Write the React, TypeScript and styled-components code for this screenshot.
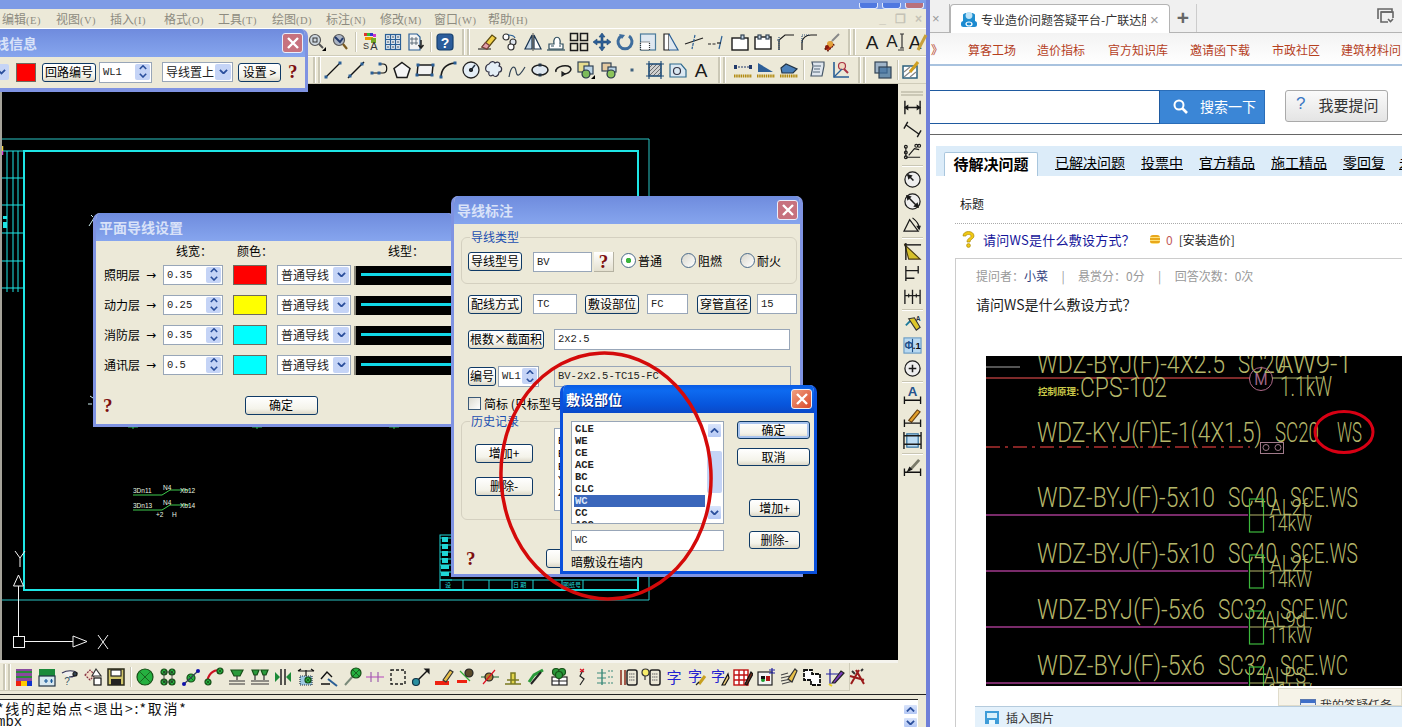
import React from "react";
import styled, { createGlobalStyle, css } from "styled-components";

const CJK = `"Noto Sans CJK SC", "Liberation Sans", sans-serif`;
const MONO = `"Liberation Mono", "Noto Sans CJK SC", monospace`;
const FACE = "#ece9d8";

const Global = createGlobalStyle`
  html, body { margin: 0; padding: 0; background: #fff; overflow: hidden; }
  * { box-sizing: border-box; }
  body { font-family: ${CJK}; font-size: 12px; color: #000; }
`;

/* ---------- page ---------- */
const Desktop = styled.div`
  position: relative;
  display: flex;
  width: 1402px;
  height: 727px;
  overflow: hidden;
`;
const CadWindow = styled.div`
  display: flex;
  flex-direction: column;
  width: 930px;
  height: 727px;
  background: ${FACE};
  border-right: 4px solid #6f7fd8;
`;
const CadTitle = styled.div`
  display: flex;
  justify-content: flex-end;
  align-items: flex-end;
  gap: 4px;
  height: 9px;
  padding-right: 2px;
  background: #7d9be6;
`;
const CadTitleBtn = styled.span<{ $red?: boolean }>`
  width: 19px;
  height: 6px;
  border: 1px solid #dfe8fb;
  border-top: 0;
  border-radius: 0 0 3px 3px;
  background: ${(p) => (p.$red ? "#b9707c" : "#4f78e0")};
`;
const MenuBar = styled.div`
  display: flex;
  align-items: center;
  height: 19px;
  padding-left: 2px;
  color: #8d8b80;
  font-size: 12px;
  white-space: nowrap;
`;
const MenuItem = styled.span`
  width: 54px;
  flex: none;
`;
const MenuLetter = styled.span`
  font-family: "Liberation Serif", serif;
  font-size: 10.5px;
  letter-spacing: 0.5px;
`;
const WinGlyphs = styled.div`
  display: flex;
  gap: 9px;
  margin-left: auto;
  padding-right: 4px;
  color: #c4c2b6;
  font-size: 12px;
  font-family: "Liberation Sans", sans-serif;
  font-weight: 700;
`;

/* ---------- toolbars ---------- */
const ToolRow = styled.div<{ $start: number }>`
  display: flex;
  align-items: center;
  height: 28px;
  padding-left: ${(p) => p.$start}px;
  background: ${FACE};
  border-top: 1px solid #fff;
  border-bottom: 1px solid #cfccb9;
`;
const Tool = styled.span`
  display: flex;
  flex: none;
  align-items: center;
  justify-content: center;
  width: 23px;
  height: 22px;
`;
const ToolGap = styled.span<{ $w: number }>`
  flex: none;
  width: ${(p) => p.$w}px;
  height: 20px;
  position: relative;
  &::after {
    content: "";
    position: absolute;
    left: 50%;
    top: 0;
    bottom: 0;
    width: 1px;
    background: #c9c6b4;
    box-shadow: 1px 0 0 #fff;
  }
`;
const Grip = styled.span<{ $w: number }>`
  flex: none;
  width: ${(p) => p.$w}px;
  height: 26px;
  display: flex;
  justify-content: center;
  gap: 2px;
  &::before,
  &::after {
    content: "";
    width: 2px;
    height: 100%;
    background: #cbc8b6;
    border-right: 1px solid #fff;
  }
`;
const CanvasRow = styled.div`
  display: flex;
  height: 576px;
`;
const Canvas = styled.div`
  width: 898px;
  height: 576px;
  margin-top: 0;
  background: #000;
  border-top: 1px solid #000;
  border-left: 2px solid #a5a39a;
`;
const DrawingSvg = styled.svg`
  display: block;
`;
const SideBar = styled.div`
  display: flex;
  flex-direction: column;
  align-items: center;
  flex: 1;
  padding-top: 7px;
`;
const SideTool = styled(Tool)`
  height: 22.5px;
`;
const SideGap = styled.span`
  flex: none;
  width: 21px;
  height: 1px;
  margin: 1.5px 0 2px;
  background: #c9c6b4;
  box-shadow: 0 1px 0 #fff;
`;
const SideGrip = styled.span`
  width: 22px;
  height: 5px;
  border-top: 2px solid #cbc8b6;
  border-bottom: 2px solid #cbc8b6;
`;
const LowerZone = styled.div`
  height: 35px;
  padding-top: 3px;
  border-bottom: 1px solid #222;
  position: relative;
`;
const WhiteStrip = styled.div`
  position: absolute;
  left: 0;
  top: 0;
  width: 898px;
  height: 3px;
  background: #f5f4ee;
`;
const BottomTools = styled.div`
  display: flex;
  align-items: center;
  width: 850px;
  height: 28px;
  padding-left: 2px;
  border-right: 1px solid #cfccb9;
  border-bottom: 1px solid #cfccb9;
  background: ${FACE};
`;
const CommandGap = styled.div`
  height: 4px;
`;
const Command = styled.div`
  display: flex;
  flex: 1;
  min-height: 0;
  width: 918px;
  border-top: 1px solid #222;
  background: #fff;
  overflow: hidden;
`;
const CommandText = styled.div`
  flex: 1;
  margin-left: -3px;
  padding-top: 1px;
  font-family: ${MONO};
  font-size: 14px;
  line-height: 14px;
  color: #111;
  white-space: pre;
`;
const CommandCjk = styled.div`
  letter-spacing: 1.75px;
  font-family: ${CJK};
`;
const CommandScroll = styled.div`
  display: flex;
  flex-direction: column;
  gap: 2px;
  width: 15px;
  padding-top: 4px;
`;
const ScrollBtn = styled.span<{ $tall?: number }>`
  display: flex;
  align-items: center;
  justify-content: center;
  flex: none;
  width: 100%;
  height: ${(p) => p.$tall ?? 11}px;
  border: 1px solid #fff;
  border-radius: 2px;
  background: linear-gradient(#d9e4fb, #b4c8f5);
`;

/* ---------- xp windows ---------- */
const Win = styled.section<{ $active?: boolean }>`
  position: absolute;
  display: flex;
  flex-direction: column;
  overflow: hidden;
  background: ${FACE};
  border: 3px solid ${(p) => (p.$active ? "#0a50dc" : "#7f93e2")};
  border-top: 0;
  border-radius: 7px 7px 0 0;
`;
const WinTitle = styled.header<{ $active?: boolean; $h?: number }>`
  display: flex;
  flex: none;
  align-items: center;
  justify-content: space-between;
  height: ${(p) => p.$h ?? 28}px;
  margin: 0 -3px;
  padding: 0 5px 0 6px;
  font-size: 14px;
  font-weight: 700;
  white-space: nowrap;
  ${(p) =>
    p.$active
      ? css`
          color: #fff;
          text-shadow: 1px 1px 0 #0a2a8a;
          background: linear-gradient(#0a5be4 0%, #0d6af0 20%, #0755dc 70%, #0a49c8 100%);
        `
      : css`
          color: #d9e2f8;
          background: linear-gradient(#6f8bdd 0%, #7896e4 40%, #86a5ee 100%);
        `}
`;
const CloseBtn = styled.span<{ $active?: boolean }>`
  display: flex;
  align-items: center;
  justify-content: center;
  width: 21px;
  height: 20px;
  border: 1px solid #e9eefb;
  border-radius: 3px;
  background: ${(p) => (p.$active ? "linear-gradient(135deg,#f0a080,#d9482a)" : "#c7727e")};
`;
const FloatBar = styled(Win)`
  left: -42px;
  top: 29px;
  width: 350px;
  height: 63px;
  border-bottom-width: 4px;
`;
const FloatBody = styled.div`
  display: flex;
  align-items: center;
  height: 30px;
`;
const FloatTitleText = styled.span`
  padding-left: 31px;
  font-size: 14px;
`;
const Swatch = styled.span<{ $c: string; $w?: number; $h?: number }>`
  flex: none;
  width: ${(p) => p.$w ?? 34}px;
  height: ${(p) => p.$h ?? 20}px;
  background: ${(p) => p.$c};
  border: 1px solid #6e6c60;
`;
const XpBtn = styled.span<{ $w: number; $h?: number; $default?: boolean }>`
  display: flex;
  flex: none;
  align-items: center;
  justify-content: center;
  width: ${(p) => p.$w}px;
  height: ${(p) => p.$h ?? 19}px;
  padding-bottom: 2px;
  border: 1px solid #0f3a66;
  border-radius: 3px;
  background: linear-gradient(#fff, #f4f3ea 70%, #dcd8c8);
  font-size: 12px;
  white-space: nowrap;
  ${(p) => p.$default && "box-shadow: inset 0 0 0 2px #a9c4ee;"}
`;
const Field = styled.span<{ $w: number; $h?: number; $ro?: boolean }>`
  display: flex;
  flex: none;
  align-items: center;
  width: ${(p) => p.$w}px;
  height: ${(p) => p.$h ?? 20}px;
  padding-left: 3px;
  padding-bottom: 1px;
  background: ${(p) => (p.$ro ? FACE : "#fff")};
  border: 1px solid #98a6b8;
  font-family: ${MONO};
  font-size: 10.5px;
  color: #222;
  white-space: nowrap;
  overflow: hidden;
`;
const SpinBox = styled(Field)`
  justify-content: space-between;
  padding-right: 1px;
`;
const SpinArrows = styled.span`
  display: flex;
  flex-direction: column;
  gap: 0;
  width: 15px;
  height: 16px;
  flex: none;
  background: #c5d4f6;
  border-radius: 2px;
  align-items: center;
  justify-content: space-around;
`;
const SelectBox = styled(Field)`
  justify-content: space-between;
  padding-right: 1px;
  font-family: ${CJK};
  font-size: 12px;
`;
const SelectArrow = styled.span`
  display: flex;
  align-items: center;
  justify-content: center;
  width: 16px;
  height: 16px;
  flex: none;
  background: #c5d4f6;
  border-radius: 2px;
`;
const Hint = styled.span`
  flex: none;
  color: #7d0f0f;
  font-family: "Liberation Serif", serif;
  font-size: 19px;
  font-weight: 700;
  line-height: 18px;
`;

/* floating bar spacers */
const Spacer = styled.span<{ $w: number }>`
  flex: none;
  width: ${(p) => p.$w}px;
`;

/* wire settings */
const WireSettings = styled(Win)`
  left: 93px;
  top: 213px;
  width: 362px;
  height: 214px;
`;
const HeaderRow = styled.div`
  display: flex;
  height: 19px;
  padding-left: 80px;
  align-items: center;
  white-space: nowrap;
`;
const HeaderCell = styled.span<{ $ml?: number }>`
  margin-left: ${(p) => p.$ml ?? 0}px;
`;
const LayerRow = styled.div`
  display: flex;
  align-items: center;
  height: 30px;
  padding-left: 8px;
`;
const LayerName = styled.span`
  width: 36px;
  flex: none;
  margin-right: 6px;
  padding-bottom: 1px;
`;
const LayerArrow = styled.span`
  flex: none;
  width: 17px;
  font-family: "DejaVu Sans", sans-serif;
  font-size: 12px;
`;
const LinePreview = styled.span`
  flex: none;
  width: 110px;
  height: 19px;
  margin-left: 3px;
  padding: 7px 0 0 5px;
  background: #000;
  border-left: 2px solid #8a887c;
  &::after {
    content: "";
    display: block;
    height: 3px;
    background: #11d8e8;
  }
`;
const WireFooter = styled.div`
  display: flex;
  align-items: center;
  height: 19px;
  margin-top: 16px;
  padding-left: 7px;
`;

/* annotation dialog */
const Annot = styled(Win)`
  left: 451px;
  top: 196px;
  width: 352px;
  height: 381px;
  border-bottom-width: 3px;
`;
const Group = styled.div<{ $h: number; $top?: number; $pt: number }>`
  position: relative;
  flex: none;
  display: flex;
  align-items: flex-start;
  width: 336px;
  height: ${(p) => p.$h}px;
  margin: ${(p) => p.$top ?? 0}px 0 0 7px;
  padding: ${(p) => p.$pt}px 0 0 6px;
  border: 1px solid #d4d0c0;
  border-radius: 6px;
`;
const Legend = styled.span`
  position: absolute;
  left: 8px;
  top: -9px;
  padding: 0 1px;
  background: ${FACE};
  color: #1c4fb0;
  font-size: 12px;
  line-height: 16px;
`;
const AnnotRow = styled.div<{ $top: number; $h?: number }>`
  display: flex;
  align-items: center;
  flex: none;
  height: ${(p) => p.$h ?? 20}px;
  margin-top: ${(p) => p.$top}px;
  padding-left: 14px;
  white-space: nowrap;
`;
const HelpBtn = styled.span`
  display: flex;
  align-items: center;
  justify-content: center;
  flex: none;
  width: 20px;
  height: 20px;
  background: linear-gradient(#fff, #e4e0cf);
  border-right: 1px solid #b5b2a2;
  border-bottom: 1px solid #b5b2a2;
`;
const Radio = styled.span<{ $w: number; $on?: boolean }>`
  display: flex;
  align-items: center;
  gap: 2px;
  flex: none;
  width: ${(p) => p.$w}px;
  &::before {
    content: "";
    width: 13px;
    height: 13px;
    border-radius: 50%;
    border: 1px solid #4a6a8a;
    background: ${(p) =>
      p.$on ? "radial-gradient(circle,#3cb43c 0 2.5px,#fff 3px)" : "linear-gradient(135deg,#d8d6cb,#fff)"};
  }
`;
const CheckBoxMark = styled.span`
  flex: none;
  width: 13px;
  height: 13px;
  margin-right: 3px;
  border: 1px solid #3c5a78;
  background: linear-gradient(135deg, #dcdad0, #fff);
`;
const ActionColumn = styled.div`
  display: flex;
  flex-direction: column;
  flex: none;
  gap: 14px;
  margin: 16px 0 0 7px;
`;
const HistoryList = styled.div`
  display: flex;
  flex-direction: column;
  flex: none;
  width: 230px;
  height: 83px;
  margin-left: 21px;
  padding: 6px 0 0 3px;
  background: #fff;
  border: 1px solid #98a6b8;
  font-family: ${MONO};
  font-size: 10.5px;
  line-height: 13px;
  white-space: nowrap;
`;
const AnnotFooter = styled.div`
  display: flex;
  align-items: center;
  height: 19px;
  margin-top: 29px;
  padding-left: 12px;
`;

/* laying place */
const Place = styled(Win)`
  left: 560px;
  top: 385px;
  width: 257px;
  height: 189px;
  border-bottom-width: 3px;
`;
const PlaceBody = styled.div`
  display: flex;
  padding: 8px 0 0 8px;
`;
const PlaceLeft = styled.div`
  display: flex;
  flex-direction: column;
  flex: none;
  width: 153px;
`;
const PlaceList = styled.div`
  display: flex;
  height: 103px;
  padding: 1px;
  overflow: hidden;
  background: #fff;
  border: 1px solid #98a6b8;
`;
const PlaceItems = styled.div`
  flex: none;
  width: 132px;
  font-family: ${MONO};
  font-size: 10.5px;
  font-weight: 700;
  line-height: 12px;
  color: #222;
  padding-left: 1px;
`;
const PlaceItem = styled.div<{ $sel?: boolean }>`
  height: 12px;
  padding-left: 1px;
  ${(p) => p.$sel && "background:#3a66bb;color:#dce6fa;"}
`;
const PlaceScroll = styled.div`
  display: flex;
  flex-direction: column;
  flex: none;
  width: 15px;
  margin-left: 2px;
  height: 99px;
  padding: 0;
`;
const PlaceThumb = styled.span`
  flex: none;
  height: 42px;
  margin: 13px 0 12px;
  background: #c5d4f6;
  border-radius: 2px;
`;
const PlaceDesc = styled.div`
  margin-top: 2px;
  line-height: 18px;
`;
const PlaceInput = styled(Field)`
  margin-top: 6px;
`;
const PlaceRight = styled.div`
  display: flex;
  flex-direction: column;
  flex: none;
  margin-left: 13px;
`;
const PlaceBtnOffset = styled.div<{ $top: number; $left?: number }>`
  margin: ${(p) => p.$top}px 0 0 ${(p) => p.$left ?? 0}px;
`;
const Overlay = styled.svg`
  position: absolute;
  left: 0;
  top: 0;
  pointer-events: none;
`;

/* ---------- browser ---------- */
const Browser = styled.div`
  position: relative;
  display: flex;
  flex-direction: column;
  flex: 1;
  min-width: 0;
  overflow: hidden;
  background: #fff;
`;
const TabBar = styled.div`
  display: flex;
  align-items: flex-end;
  height: 33px;
  background: #f0f0f0;
  border-bottom: 1px solid #b4b4b4;
  flex: none;
`;
const GhostTabEnd = styled.span`
  display: flex;
  align-items: center;
  width: 20px;
  height: 28px;
  color: #999;
  font-size: 13px;
  padding-left: 2px;
  font-family: "Liberation Sans", sans-serif;
  border-right: 1px solid #b4b4b4;
`;
const ActiveTab = styled.div`
  display: flex;
  align-items: center;
  gap: 4px;
  width: 220px;
  height: 29px;
  margin-bottom: -1px;
  padding: 0 4px 0 10px;
  background: #fff;
  border: 1px solid #b4b4b4;
  border-bottom: 0;
  border-radius: 4px 4px 0 0;
  font-size: 12px;
  color: #333;
  white-space: nowrap;
`;
const TabText = styled.span`
  width: 165px;
  flex: none;
  overflow: hidden;
`;
const TabClose = styled.span`
  color: #999;
  font-family: "Liberation Sans", sans-serif;
  font-size: 15px;
`;
const PlusCell = styled.span`
  display: flex;
  align-items: center;
  justify-content: center;
  width: 27px;
  height: 28px;
  color: #666;
  font-family: "Liberation Sans", sans-serif;
  font-size: 21px;
  font-weight: 700;
  border-right: 1px solid #ccc;
`;
const TabRight = styled.span`
  margin: 0 8px 6px auto;
`;
const LinkBar = styled.nav`
  display: flex;
  align-items: center;
  flex: none;
  height: 33px;
  padding: 2px 0 0 1px;
  background: linear-gradient(#f3f3f3, #fff);
  border-bottom: 2px solid #a9c3df;
  color: #b5401e;
  font-size: 12px;
  white-space: nowrap;
`;
const NavLink = styled.span<{ $ml: number }>`
  margin-left: ${(p) => p.$ml}px;
  flex: none;
`;
const SearchRow = styled.div`
  display: flex;
  flex: none;
  align-items: flex-start;
  height: 69px;
  padding-top: 24px;
  border-bottom: 1px solid #666;
`;
const SearchInput = styled.div`
  width: 230px;
  height: 34px;
  border: 1px solid #1f5aa0;
  border-left: 0;
`;
const SearchBtn = styled.div`
  display: flex;
  align-items: center;
  gap: 12px;
  width: 105px;
  height: 34px;
  padding: 0 0 2px 13px;
  background: #3b86d6;
  border: 1px solid #2a6db8;
  border-left: 0;
  color: #fff;
  font-size: 14px;
`;
const AskBtn = styled.div`
  display: flex;
  align-items: center;
  gap: 13px;
  width: 103px;
  height: 32px;
  margin-left: 20px;
  padding: 0 0 4px 10px;
  background: linear-gradient(#fafafa, #e4e4e4);
  border: 1px solid #aaa;
  border-radius: 3px;
  color: #333;
  font-size: 15px;
  white-space: nowrap;
`;
const AskMark = styled.span`
  color: #3b78c4;
  font-family: "Liberation Sans", sans-serif;
  font-size: 17px;
`;
const QTabs = styled.div`
  display: flex;
  flex: none;
  align-items: flex-end;
  height: 30px;
  margin: 11px 0 0 6px;
  padding-left: 8px;
  background: #dcecf9;
  white-space: nowrap;
  font-size: 14px;
`;
const QActive = styled.span`
  display: flex;
  align-items: center;
  justify-content: center;
  flex: none;
  width: 94px;
  height: 24px;
  padding-bottom: 3px;
  background: #fff;
  border: 1px solid #a9c6dd;
  border-bottom: 0;
  border-radius: 2px 2px 0 0;
  font-size: 15px;
  font-weight: 700;
`;
const QLink = styled.span<{ $ml: number }>`
  flex: none;
  margin: 0 0 4px ${(p) => p.$ml}px;
  text-decoration: underline;
`;
const ColTitle = styled.div`
  flex: none;
  height: 48px;
  margin-left: 25px;
  padding: 19px 0 0 5px;
  border-bottom: 1px dotted #aaa;
  line-height: 18px;
  font-size: 12px;
  color: #222;
`;
const QuestionRow = styled.div`
  display: flex;
  flex: none;
  align-items: center;
  height: 34px;
  padding: 0 0 3px 32px;
  white-space: nowrap;
`;
const QuestionLink = styled.span`
  margin-left: 8px;
  color: #14149a;
  font-size: 13px;
  letter-spacing: 0.25px;
`;
const Coin = styled.span`
  width: 10px;
  height: 9px;
  margin-left: 15px;
  border-radius: 3px;
  background: repeating-linear-gradient(#e8a71c 0 2px, #ffe27a 2px 3px);
`;
const Score = styled.span`
  margin: 0 6px 0 6px;
  color: #c25a5a;
`;
const CategoryTag = styled.span`
  color: #222;
  font-size: 12px;
`;
const QuestionBox = styled.div`
  position: relative;
  flex: 1;
  min-height: 0;
  margin-left: 25px;
  border-top: 1px solid #ccc;
  border-left: 1px solid #ccc;
  display: flex;
  flex-direction: column;
`;
const Meta = styled.div`
  flex: none;
  display: flex;
  height: 34px;
  align-items: center;
  padding: 0 0 2px 20px;
  color: #999;
  font-size: 12px;
  white-space: nowrap;
`;
const Asker = styled.b`
  font-weight: 400;
  color: #33407c;
`;
const MetaBar = styled.span`
  width: 30px;
  text-align: center;
`;
const QuestionText = styled.div`
  flex: none;
  height: 63px;
  padding: 1px 0 0 20px;
  font-size: 14px;
  color: #222;
`;
const PictureSvg = styled.svg`
  display: block;
  flex: none;
  margin-left: 30px;
`;
const TaskPopup = styled.div`
  position: absolute;
  right: 0;
  bottom: 21px;
  display: flex;
  align-items: flex-start;
  gap: 4px;
  width: 124px;
  height: 18px;
  padding: 10px 0 0 21px;
  background: #f6f3e8;
  border: 1px solid #e0dccb;
  overflow: hidden;
  color: #333;
  font-size: 12px;
  white-space: nowrap;
  line-height: 12px;
`;
const TaskIcon = styled.span`
  flex: none;
  width: 16px;
  height: 10px;
  background: linear-gradient(#3f6fc8 0 3px, #e8eef8 3px);
  border: 1px solid #5a78b0;
`;
const InsertRow = styled.div`
  position: absolute;
  left: 975px;
  right: 0;
  bottom: 0;
  display: flex;
  align-items: center;
  gap: 7px;
  height: 21px;
  padding-left: 10px;
  background: #e4f1fb;
  border-top: 1px solid #b5cbdd;
  font-size: 12px;
  color: #333;
`;

/* ---------- icon helpers ---------- */
const Ico = ({ children, s = 20 }: { children: React.ReactNode; s?: number }) => (
  <svg width={s} height={s} viewBox="0 0 20 20" fill="none" stroke="#1b1b1b" strokeWidth="1.2">
    {children}
  </svg>
);
const BL = "#2a5f96";
const TL = "#1c7a9c";
const Node = ({ x, y, c = BL }: { x: number; y: number; c?: string }) => <rect x={x - 1.5} y={y - 1.5} width="3" height="3" fill={c} stroke="none" />;
const GreenBall = ({ x, y, r = 3 }: { x: number; y: number; r?: number }) => (
  <g>
    <circle cx={x} cy={y} r={r} fill="#25b040" stroke="#174f17" />
    <path d={`M${x - r * 0.6} ${y - r * 0.6}L${x + r * 0.6} ${y + r * 0.6}M${x + r * 0.6} ${y - r * 0.6}L${x - r * 0.6} ${y + r * 0.6}`} stroke="#174f17" strokeWidth="0.8" />
  </g>
);
const Glyph = ({ t, x = 10, y = 16, size = 17, fill = "#1b1b1b", w = 400 }: { t: string; x?: number; y?: number; size?: number; fill?: string; w?: number }) => (
  <text x={x} y={y} textAnchor="middle" fontFamily={`"Liberation Sans", "Noto Sans CJK SC", sans-serif`} fontSize={size} fontWeight={w} fill={fill} stroke="none">
    {t}
  </text>
);

const rowOneA = [
  <><circle cx="8" cy="8" r="5.5" fill="#cdd7df" stroke="#555" /><rect x="6" y="6" width="4" height="4" stroke="#333" strokeWidth="1" /><path d="M12 12l4 4" stroke="#555" strokeWidth="2" /><path d="M19 19h-4l4-4z" fill="#000" stroke="none" /></>,
  <><circle cx="9" cy="8" r="5.5" fill="#aab4c4" stroke="#555" /><path d="M5 5l5 5 3-4" stroke="#233a6a" strokeWidth="2" /><path d="M13 12l4 5" stroke="#7a5a20" strokeWidth="2.2" /></>,
];
const rowOneB = [
  <><rect x="4" y="1" width="3" height="3" fill="#d33" stroke="none" /><rect x="7" y="1" width="3" height="3" fill="#3b3" stroke="none" /><rect x="10" y="1" width="3" height="3" fill="#33c" stroke="none" /><rect x="13" y="2" width="3" height="3" fill="#c3c" stroke="none" /><rect x="5" y="5" width="8" height="3" fill="#e90" stroke="none" /><rect x="11" y="6" width="5" height="5" fill="#7a2" stroke="none" /><Glyph t="S" x="6" y="17" size="9" fill="#333" /><Glyph t="A" x="14" y="18" size="11" fill="#333" /></>,
  <><rect x="2.5" y="2.5" width="15" height="15" fill="#dfe7ee" stroke={BL} /><path d="M7.5 3v14M12.5 3v14M3 7.5h14M3 12.5h14" stroke={BL} /><path d="M5 5h0M10 5h0M15 5h0M5 10h0M10 10h0M15 10h0M5 15h0M10 15h0M15 15h0" stroke="#234" strokeLinecap="round" strokeWidth="1.5" /></>,
  <><path d="M3 2h8l3 3v13H3z" fill="#f4f4f4" stroke={BL} /><path d="M5 6h2v2H5zM9 6h2v2H9zM5 10h2v2H5zM9 10h2v2H9z" stroke="#456" strokeWidth="0.8" /><path d="M15 8v7m-2.5-2l2.5 3 2.5-3" stroke="#222" strokeWidth="1.5" /></>,
];
const helpIcon = (
  <><rect x="2" y="2" width="16" height="16" rx="3" fill="#2c5d9b" stroke="#16406f" /><Glyph t="?" y="15.5" size="14" fill="#fff" w={700} /></>
);
const rowOneC = [
  <><path d="M1 17h13" stroke="#333" /><path d="M5 15L15 3l4 3-9 11z" fill="#f1cf46" stroke="#5a4a10" /><path d="M5 15l3.5-4.5 4 3L10 17z" fill="#e3a0a8" stroke="#7a4040" /></>,
  <><circle cx="6" cy="5" r="3" stroke="#333" fill="#fff" /><circle cx="13" cy="10" r="3" stroke="#333" fill="#dfe6ee" /><circle cx="11" cy="15" r="3" stroke="#333" fill="#fff" /><path d="M8 3c3 0 6 0 7 3" stroke={BL} /></>,
  <><path d="M9 3L2 17h7z" fill="#c7d9e8" stroke="#1a3450" /><path d="M11 3l7 14h-7z" fill="#fff" stroke="#1a3450" /><path d="M10 1v18" stroke="#333" strokeWidth="0.8" /></>,
  <><path d="M3 12h5c-2-9 8-9 6 0h3v5H3z" fill="#fff" stroke="#2a4a5a" /><path d="M5 14h3M13 14h2" stroke="#2a4a5a" /><path d="M1 18h18" stroke="#2a4a5a" /></>,
  <><rect x="1.5" y="1.5" width="7" height="7" strokeWidth="1.5" /><rect x="11.5" y="1.5" width="7" height="7" strokeWidth="1.5" /><rect x="1.5" y="11.5" width="7" height="7" strokeWidth="1.5" /><rect x="11.5" y="11.5" width="7" height="7" strokeWidth="1.5" /></>,
  <><path d="M10 1l3 4h-2v4h4V7l4 3-4 3v-2h-4v4h2l-3 4-3-4h2v-4H5v2l-4-3 4-3v2h4V5H7z" fill="#2d5f98" stroke="#1d4674" strokeWidth="0.6" /></>,
  <><path d="M6 4a7 7 0 1 0 8 0" stroke="#3e6d9d" strokeWidth="3" /><path d="M4 2l6 1-3 4z" fill="#3e6d9d" stroke="none" /></>,
  <><rect x="2.5" y="2" width="15" height="16" fill="#dfe8f0" stroke="#4a7a9a" /><rect x="2.5" y="10" width="9" height="8" fill="#fff" stroke="#333" strokeDasharray="1 1" /></>,
  <><path d="M3 2h5v16H3z" fill="#fff" stroke="#222" /><path d="M8 2l9 16H8" fill="#dfe8f0" stroke={BL} /></>,
  <><path d="M1 12L19 6" stroke="#222" /><path d="M11 3L8 17" stroke={BL} strokeDasharray="3 1" /></>,
  <><path d="M1 12h9M12 11h0" stroke="#222" strokeDasharray="3 1.5" /><path d="M15 4l-3 13" stroke={BL} /><path d="M10 11h4" stroke="#222" /></>,
  <><rect x="2" y="6" width="16" height="12" fill="#fff" strokeWidth="1.4" /><rect x="11" y="3" width="3" height="4" fill="#c7d6e6" stroke="#345" /></>,
  <><rect x="2" y="5" width="16" height="12" fill="#fff" strokeWidth="1.4" /><rect x="5" y="3" width="3" height="4" fill="#c7d6e6" stroke="#345" /><rect x="13" y="3" width="3" height="4" fill="#c7d6e6" stroke="#345" /></>,
  <><path d="M3 18V8L9 3h9" strokeWidth="1.2" /><path d="M1 8h4" strokeDasharray="1 1" stroke="#357" /><path d="M3 18V5" strokeDasharray="1 1" stroke="#357" /></>,
  <><path d="M3 18V11C3 6 7 3 12 3h6" strokeWidth="1.2" /><path d="M3 11V3h8" stroke="#357" strokeDasharray="1 1" /></>,
  <><path d="M3 17l6-7 3 3-6 6z" fill="#c43418" stroke="#5a1a0a" strokeDasharray="2 1" /><path d="M10 9l7-7" stroke="#888" strokeWidth="2" /><circle cx="8" cy="12" r="3" fill="#e2a23a" stroke="none" /><circle cx="5" cy="15" r="2" fill="#8a1a0a" stroke="none" /></>,
];
const rowOneD = [
  <Glyph t="A" size={19} x={10} y={17} />,
  <><Glyph t="A" x={7} y={15} size={17} /><path d="M15 2h4M17 2v14M15 16h4M13 18h6" stroke="#333" /></>,
  <><Glyph t="A" x={7} y={17} size={19} /><path d="M10 18l8-15" stroke="#c7a13a" strokeWidth="3" /></>,
];
const rowTwoA = [
  <><path d="M3 17L17 3" stroke="#111" /><Node x={3} y={17} /><Node x={17} y={3} /></>,
  <><path d="M2 18L18 2" stroke="#111" strokeWidth="1.5" /><Node x={4} y={16} /><Node x={16} y={4} /></>,
  <><path d="M3 13h7M12 4h2c5 0 5 9 0 9h-4" stroke="#111" /><Node x={3} y={13} /><Node x={11} y={4} /><Node x={10} y={13} /></>,
  <path d="M10 2.5l8 6-3 9H5l-3-9z" fill="#f5f5f5" strokeWidth="1.5" />,
  <><path d="M3 5h15l-1 10H2z" fill="#f2f2f2" strokeWidth="1.5" /><Node x={3} y={5} /><Node x={18} y={5} /><Node x={2} y={15} /><Node x={17} y={15} /></>,
  <><path d="M3 18C3 9 8 4 17 3" strokeWidth="1.6" /><Node x={3} y={17} /><Node x={17} y={3} /></>,
  <><circle cx="10" cy="10" r="8" fill="#e4eef6" stroke="#222" strokeWidth="1.3" /><path d="M10 10l4-5" stroke="#234" strokeWidth="1.5" /><circle cx="10" cy="10" r="1.5" fill="#234" /></>,
  <path d="M5 4c2-3 5-3 6-1 3-2 6 0 4 3 4 1 3 6 0 6 0 4-4 6-6 3-3 2-5 0-4-3C0 12 1 5 5 4z" fill="#e4eef6" stroke="#334" />,
  <path d="M2 17C4 5 8 5 9 11s3 6 9-4" stroke="#345" />,
  <><ellipse cx="10" cy="10" rx="8" ry="5" fill="#dfe8f0" strokeWidth="1.5" /><Node x={10} y={5} c="#234" /><Node x={10} y={15} c="#234" /></>,
  <><path d="M3 12C1 6 17 3 18 9c0 3-4 5-7 5" strokeWidth="1.5" /><path d="M9 12l3 2-3 2z" fill="#234" /></>,
  <><rect x="2" y="2" width="11" height="10" fill="#e6dc8e" stroke="#345" /><rect x="8" y="6" width="9" height="8" fill="#bcd5e6" stroke="#345" /><circle cx="10" cy="14" r="4" fill="#7cba5a" stroke="#234" /><path d="M19 19h-4l4-4z" fill="#000" stroke="none" /></>,
  <><rect x="3" y="3" width="9" height="8" fill="#e4c9a0" stroke="#345" /><rect x="9" y="7" width="8" height="5" fill="#bcd5e6" stroke="#345" /><circle cx="12" cy="14" r="4" fill="#8cc45a" stroke="#234" /></>,
  <rect x="8.5" y="8.5" width="3" height="3" fill="#40627e" stroke="none" />,
  <><rect x="4" y="4" width="12" height="12" fill="#cfcfcf" stroke="#24507a" /><path d="M4 8l4-4M4 12l8-8M4 16L16 4M8 16l8-8M12 16l4-4" stroke="#444" strokeWidth="0.7" /><path d="M1 4h18M1 16h18M4 1v18M16 1v18" stroke="#24507a" /></>,
  <><path d="M2 4h11l5 6v7H2z" fill="#dbe8f2" stroke="#2f6a8e" /><circle cx="9" cy="11" r="3.5" stroke="#334" /></>,
  <Glyph t="A" size={19} y={17} />,
];
const Ruler = ({ y = 17 }: { y?: number }) => <path d={`M1 ${y}h18`} stroke="#b28a10" strokeWidth="3" strokeDasharray="1.5 .7" />;
const rowTwoB = [
  <><path d="M2 7h16" stroke="#223a6a" strokeDasharray="2 1" /><rect x="1" y="5" width="3" height="4" fill="#223a6a" stroke="none" /><rect x="16" y="5" width="3" height="4" fill="#223a6a" stroke="none" /><Ruler y={16} /></>,
  <><path d="M2 3l15 9H2z" fill="#2d5f98" stroke="none" /><Ruler y={16} /></>,
  <><path d="M2 8l5-4 11 5-4 4H3z" fill="#4a80ba" stroke="#234" /><Ruler y={16} /></>,
];
const rowTwoC = [
  <><path d="M4 2h12v4l-2 10H3l2-10z" fill="#dfe6ee" stroke="#456" /><path d="M6 6h7M6 9h6M5 12h7" stroke="#567" /></>,
  <><path d="M3 2v15h15" stroke={BL} strokeWidth="1.6" /><circle cx="11" cy="6" r="3.5" fill="#f0d8c0" stroke="#a34" /><path d="M13 9l4 4" stroke="#a34" strokeWidth="2" /><path d="M3 17l8-8" stroke={BL} /></>,
];
const rowTwoD = [
  <><rect x="2" y="2" width="12" height="11" fill="#9fb4c8" stroke="#345" /><rect x="6" y="7" width="12" height="11" fill="#3e6f9d" fillOpacity="0.75" stroke="#345" /></>,
  <><rect x="2" y="6" width="14" height="12" fill="#fff" stroke="#2a5f7c" strokeWidth="1.5" /><path d="M3 17l12-10M3 12l6-5M9 17l6-5" stroke="#888" /><path d="M9 12l8-10" stroke="#d0a020" strokeWidth="3" /></>,
];
const DimBar = ({ y = 17 }: { y?: number }) => (
  <path d={`M1 ${y}h18M1.5 ${y - 4}v8M18.5 ${y - 4}v8`} stroke="#111" strokeWidth="1.4" />
);
const sideIcons: (React.ReactNode | "sep")[] = [
  <><path d="M2 10h16M2 3v14M18 3v14" strokeWidth="1.5" /><path d="M2 10l3-2v4zM18 10l-3-2v4z" fill="#111" /></>,
  <><path d="M3 5l14 10M1 9l4-7M15 18l4-7" strokeWidth="1.5" /></>,
  <><path d="M3 15V4M3 15h15M6 13l6-7 5 1" strokeWidth="1.2" /><circle cx="3" cy="4" r="1.5" /><circle cx="3" cy="10" r="1.5" /><circle cx="3" cy="15" r="1.5" /><circle cx="14" cy="3" r="1.5" /><circle cx="17" cy="3" r="1.5" /></>,
  "sep",
  <><circle cx="10" cy="10" r="8" fill="#eee" strokeWidth="1.3" /><path d="M5 5l6 6" strokeWidth="1.6" /><path d="M5 5l4 1-3 3z" fill="#111" /></>,
  <><circle cx="10" cy="10" r="8" fill="#eee" strokeWidth="1.3" /><path d="M4.5 4.5l11 11" strokeWidth="1.6" /><path d="M4 4l4 1-3 3zM16 16l-4-1 3-3z" fill="#111" /></>,
  <><path d="M1 17h15L7 5z" strokeWidth="1.3" /><path d="M10 3c4 3 7 7 7 11" stroke="#111" /><path d="M17 15l-2-3h3z" fill="#111" /></>,
  "sep",
  <><path d="M1 3h18" strokeWidth="1.5" /><path d="M2 3l16 15h-12z" fill="#d5c02a" stroke="#4a3a10" /><path d="M3 1v18" strokeWidth="1.5" /></>,
  <><path d="M3 2v16M16 2v8M3 7h13M3 15h9" strokeWidth="1.4" /></>,
  <><path d="M2 3v15M10 3v15M18 3v15M2 9h16" strokeWidth="1.4" /><path d="M6 7v4M14 7v4" /></>,
  "sep",
  <><path d="M9 6L3 12" stroke={TL} strokeWidth="2" /><path d="M6 5l6-1 6 10-4 3z" fill="#dec72a" stroke="#333" /><Glyph t="A" x={16} y={7} size={7} fill="#234" w={700} /></>,
  <><rect x="1" y="2" width="18" height="16" fill="#b8d9f1" stroke="#6a9cc4" /><Glyph t="Φ" x={6} y={14} size={11} fill="#1d4f88" w={700} /><path d="M10 3v14" stroke="#1d4f88" /><Glyph t=".1" x={14.5} y={14} size={10} fill="#111" w={700} /></>,
  <><circle cx="10" cy="10" r="8" fill="#eee" strokeWidth="1.3" /><path d="M6 10h8M10 6v8" strokeWidth="1.6" /></>,
  "sep",
  <><Glyph t="A" x={10} y={11} size={14} fill="#24528e" w={700} /><DimBar y={15} /></>,
  <><path d="M6 13L15 2l3 2-9 11z" fill="#e2a02a" stroke="#6a4010" /><DimBar y={16} /></>,
  <><rect x="4" y="3" width="12" height="14" fill="#bcdcf4" stroke="#2a6a9a" /><path d="M1 1v18M19 1v18M1 5h18M1 14h18" strokeWidth="1.5" /></>,
  "sep",
  <><path d="M8 12L17 2" stroke="#7a7a6a" strokeWidth="3" /><path d="M5 14l4-2-2-2z" fill="#111" /><DimBar y={15} /></>,
];
const bottomA = [
  <><rect x="2" y="2" width="16" height="12" fill="#8a4aa0" stroke="none" /><path d="M2 5h16M2 10h16" stroke="#2a8a3a" strokeWidth="2" /><rect x="2" y="14" width="5" height="5" fill="#e21" stroke="none" /><rect x="7" y="14" width="6" height="5" fill="#fc0" stroke="none" /><rect x="13" y="14" width="5" height="5" fill="#13c" stroke="none" /></>,
  <><rect x="2" y="2" width="16" height="7" fill="#1a8a3a" stroke="none" /><rect x="2" y="9" width="16" height="10" fill="#d8e8f0" stroke="#234" /><path d="M7 14h4M9 12v4M13 14h3M14.5 12v4" stroke="#1a5a9a" /></>,
  <><path d="M2 6c5-3 12-3 15 0-1 3-4 4-8 4" stroke="#335" fill="#f0f0f0" /><circle cx="15" cy="7" r="2" fill="#345" /><Glyph t="?" x={7} y={18} size={10} fill="#356" /></>,
  <><path d="M2 8l5-5 5 5-5 5z" fill="#f2dcc8" stroke="#834" strokeDasharray="2 1" /><path d="M13 2l5 7h-9z" fill="#fff" stroke="#333" /><rect x="11" y="11" width="7" height="7" fill="#fff" stroke="#111" /></>,
  <><rect x="2" y="2" width="16" height="16" fill="#cfc46a" stroke="#2a2a1a" strokeWidth="1.5" /><rect x="5" y="3" width="10" height="6" fill="#fff" stroke="#222" /><rect x="5" y="12" width="10" height="6" fill="#222" stroke="none" /></>,
];
const bottomB = [
  <GreenBall x={10} y={10} r={8} />,
  <><GreenBall x={6} y={5} /><GreenBall x={14} y={5} /><GreenBall x={6} y={15} /><GreenBall x={14} y={15} /><path d="M6 5h8v10H6z" stroke="#333" strokeWidth="0.8" /></>,
  <><GreenBall x={10} y={11} r={4} /><path d="M3 17L17 4" stroke="#345" /><circle cx="3" cy="17" r="2" fill="#11a" stroke="none" /><circle cx="17" cy="4" r="2" fill="#11a" stroke="none" /></>,
  <><path d="M3 16C4 7 9 3 16 3" stroke="#c12" strokeWidth="2.2" /><GreenBall x={4} y={15} r={3} /><GreenBall x={16} y={4} r={3} /></>,
  <><path d="M4 3h12l-3 6H7z" fill="#2a9a3a" stroke="#174f17" /><path d="M10 9v4M2 14h16M2 17h16" stroke="#333" /></>,
  <><path d="M2 3h7l-2 5H4zM11 3h7l-2 5h-3z" fill="#2a9a3a" stroke="#174f17" /><path d="M5 8v5M14 8v5M1 14h18M1 17h18" stroke="#333" /></>,
  <><path d="M8 2v16M12 2v16" stroke="#222" strokeWidth="1.5" /><path d="M2 5l5 5-5 5zM18 5l-5 5 5 5z" fill="#1c8a38" stroke="none" /></>,
  <><rect x="4" y="9" width="12" height="9" fill="#9cc8e2" stroke="#234" strokeDasharray="1 1" /><GreenBall x={12} y={13} r={3} /><path d="M2 4h16M2 4l3-2M18 4l-3-2M10 3v6" stroke="#111" /></>,
  <><path d="M2 12l6-7 5 5M2 17h9" stroke="#111" strokeWidth="1.4" /><path d="M9 12l9 7" stroke={BL} strokeWidth="2" /></>,
  <><path d="M3 18L12 8" stroke="#7a8a7a" strokeWidth="2" /><GreenBall x={14} y={6} r={5} /></>,
  <><path d="M1 10h18" stroke="#c060c0" /><path d="M6 5v10M13 5v10" stroke="#a060b0" /></>,
  <rect x="3" y="3" width="14" height="14" strokeDasharray="3 2" strokeWidth="1.4" />,
  <><path d="M5 15L17 3" stroke="#111" strokeWidth="1.5" /><path d="M14 2l4 0 0 4z" fill="#111" /><circle cx="5" cy="15" r="3.5" fill="#2a8fa0" stroke="#134" /></>,
  <><rect x="1" y="14" width="14" height="4" fill="#e21" stroke="none" /><path d="M9 13L16 3l3 2-7 10z" fill="#e8c04a" stroke="#333" /></>,
  <><rect x="0" y="13" width="10" height="3" fill="#e21" stroke="none" /><path d="M3 4l10 10" stroke="#3a3" /><circle cx="12" cy="6" r="4" fill="#5a4a2a" stroke="#222" /></>,
  <><path d="M1 10h18" stroke="#3a7a4a" /><circle cx="9" cy="10" r="4" fill="#ad8030" stroke="#222" /><path d="M3 17L15 3" stroke="#d12" /></>,
  <><path d="M2 17h16M8 17V6h4v11M4 13h12" stroke="#7a7a20" strokeWidth="1.5" fill="#e2d44a" /></>,
  <><path d="M3 15L8 8l9-5" stroke="#2a9a3a" strokeWidth="3" /><path d="M5 17L15 5" stroke="#222" strokeWidth="2" /></>,
  <><rect x="3" y="10" width="15" height="8" fill="#fff" stroke="#222" /><path d="M10 10v8M3 14h15" stroke="#222" /><circle cx="7" cy="5" r="3.5" fill="#2a9a3a" stroke="#174f17" /><circle cx="13" cy="5" r="3.5" fill="#2a9a3a" stroke="#174f17" /><circle cx="10" cy="8" r="3.5" fill="#2a9a3a" stroke="#174f17" /></>,
  <><path d="M11 3l-3 6 4 3-4 6" stroke="#222" /><path d="M8 2l4 3M12 2L8 5" stroke="#d12" /></>,
  <><path d="M7 2v16" stroke="#3a8a7a" strokeWidth="1.4" /><path d="M2 6h9M2 11h9M2 16h9" stroke="#3a8a7a" /><path d="M13 4h5M13 10h5M13 16h5" stroke="#3a8a7a" strokeDasharray="2 1" /></>,
  <><path d="M3 3v15M7 3v15" stroke="#8a2a1a" strokeWidth="1.5" /><rect x="9" y="3" width="10" height="15" rx="2" stroke="#222" strokeWidth="1.5" /><path d="M11 7h6M11 10h6M11 13h6" stroke="#666" strokeDasharray="1.5 .5" /></>,
  <><circle cx="4.5" cy="5.5" r="3.5" fill="#f8ee6a" stroke="#333" /><path d="M4 9v4" stroke="#333" /><rect x="9" y="3" width="10" height="15" rx="2" stroke="#222" strokeWidth="1.5" /><path d="M11 7h6M11 10h6M11 13h6" stroke="#666" strokeDasharray="1.5 .5" /></>,
  <Glyph t="字" size={15} y={16} fill="#2222d0" />,
  <><Glyph t="字" size={14} x={8} y={14} fill="#2222d0" /><path d="M12 17l6-8" stroke="#c8a020" strokeWidth="3" /><path d="M9 18l3-3" stroke="#222" /></>,
  <><Glyph t="字" size={14} x={8} y={14} fill="#2222d0" /><path d="M12 18L18 7l1 4-4 7z" fill="#e8c87a" stroke="#111" /></>,
  <><rect x="1" y="3" width="14" height="15" fill="#fff" stroke="#c01010" strokeWidth="1.4" /><path d="M1 8h14M1 13h14M6 3v15M11 3v15" stroke="#c01010" strokeWidth="1.4" /><path d="M12 17l6-12 2 2-6 11z" fill="#6a2a1a" stroke="#111" /></>,
  <><rect x="2" y="5" width="14" height="13" fill="#f4f4f4" stroke="#222" /><circle cx="7" cy="13" r="2" fill="#1a9a2a" stroke="none" /><rect x="10" y="9" width="4" height="5" fill="#b01818" stroke="none" /><rect x="5" y="9" width="4" height="3" fill="#111" stroke="none" /><path d="M13 3h6M13 6h6M16 1v5" stroke="#2222a0" /></>,
  <><path d="M2 8l7-2M2 11l9-2M2 14l10-2M3 17l11-3" stroke="#444" /><path d="M9 12l7-10 2 2-5 11z" fill="#e8c04a" stroke="#333" /></>,
  <path d="M2 3h8v4h8v11H9v-5H2z" fill="#fff" stroke="#111" strokeWidth="1.8" strokeDasharray="4 1" />,
  <><path d="M1 7h13M5 2v15" stroke="#2222a0" /><path d="M7 16L16 4l3 2-9 10z" fill="#7a3ac0" stroke="#222" /><path d="M4 17l3 2" stroke="#e8d020" strokeWidth="2" /></>,
  <><path d="M8 3l8 14M11 3l-8 14M2 9l14 4" stroke="#9a1a1a" strokeWidth="2" /><path d="M4 4l3 3M13 4l2-2" stroke="#333" strokeWidth="2" /></>,
];
const TB = ({ items }: { items: React.ReactNode[] }) => (
  <>
    {items.map((n, i) => (
      <Tool key={i}>
        <Ico>{n}</Ico>
      </Tool>
    ))}
  </>
);

/* chevrons */
const Chev = ({ dir = "down", w = 9, c = "#2b4f9c" }: { dir?: "up" | "down"; w?: number; c?: string }) => (
  <svg width={w} height={w * 0.6} viewBox="0 0 10 6" fill="none" stroke={c} strokeWidth="2">
    <path d={dir === "down" ? "M1 1l4 4 4-4" : "M1 5l4-4 4 4"} />
  </svg>
);
const XMark = () => (
  <svg width="12" height="12" viewBox="0 0 12 12" stroke="#fff" strokeWidth="2.4">
    <path d="M1 1l10 10M11 1L1 11" />
  </svg>
);
const Spin = ({ w, h = 20, v }: { w: number; h?: number; v: string }) => (
  <SpinBox $w={w} $h={h}>
    {v}
    <SpinArrows>
      <Chev dir="up" w={8} />
      <Chev w={8} />
    </SpinArrows>
  </SpinBox>
);
const Select = ({ w, h = 20, v }: { w: number; h?: number; v: string }) => (
  <SelectBox $w={w} $h={h}>
    {v}
    <SelectArrow>
      <Chev />
    </SelectArrow>
  </SelectBox>
);

/* ---------- cad model drawing ---------- */
const CY = "#1fd6d6";
const CadDrawing = () => {
  const left = [178, 205, 233, 261, 288];
  const stamp = [538, 545, 552, 559, 565, 572, 580];
  const cols = [463, 489, 512, 533, 562, 583];
  return (
    <DrawingSvg width="896" height="575" viewBox="2 85 896 575" fill="none">
      <path d="M2 139h647v461H2" stroke="#2bc4c4" strokeWidth="1" />
      <rect x="24" y="151" width="614" height="439" stroke="#1ee6e6" strokeWidth="2" />
      <path d="M7 151v141M13 151v141M18 151v141M2 151h22" stroke="#1ee6e6" />
      {left.map((y) => (
        <path key={y} d={`M2 ${y}h22`} stroke="#1ee6e6" />
      ))}
      <path d="M3 216h4v3H3zM3 222h4v6H3z" fill="#1ee6e6" />
      <path d="M2.5 146v5" stroke="#f0d040" strokeWidth="1.5" />
      <path d="M2.5 151v4" stroke="#e040e0" strokeWidth="1.5" />
      <path d="M89 226l5-8M91 215l2 2" stroke="#cfeff0" />
      <path d="M90 396l3 2M88 404l4 0" stroke="#cfeff0" />
      {[133, 257, 394].map((x) => (
        <g key={x} stroke="#2db85a">
          <path d={`M${x - 5} 427h10M${x} 425v4`} />
        </g>
      ))}
      {/* small circuit */}
      <g stroke="#3ecb4e" strokeWidth="1">
        <path d="M133 495h29l8-5h19" />
        <path d="M133 510h29l8-5h19" />
      </g>
      <g fontFamily='"Liberation Sans", sans-serif' fontSize="6.5" fill="#e8f8e0">
        <text x="133" y="493">3Dn11</text>
        <text x="163" y="490">N4</text>
        <text x="180" y="493">Xb12</text>
        <text x="133" y="508">3Dn13</text>
        <text x="163" y="505">N4</text>
        <text x="180" y="508">Xb14</text>
        <text x="156" y="517">+2</text>
        <text x="172" y="517">H</text>
      </g>
      {/* title block */}
      <rect x="440" y="535" width="198" height="55" stroke={CY} />
      {stamp.map((y) => (
        <path key={y} d={`M440 ${y}h12`} stroke={CY} />
      ))}
      {cols.map((x) => (
        <path key={x} d={`M${x} 580v10`} stroke={CY} />
      ))}
      <path d="M440 580h198" stroke={CY} />
      <g fill={CY} fontFamily='"Noto Sans CJK SC", sans-serif' fontSize="6">
        <path d="M442 537h6v5h-6zM442 544h6v5h-6zM442 551h6v5h-6zM442 558h6v5h-6zM441 565h8v4h-8zM441 572h8v4h-8z" />
        <text x="445" y="587">设</text>
        <text x="513" y="587">日 期</text>
        <text x="563" y="587">图纸号</text>
      </g>
      {/* ucs */}
      <g stroke="#f4f4f4" strokeWidth="1">
        <rect x="13.5" y="636.5" width="11" height="11" />
        <path d="M18.5 636v-50M25 641.5h48" />
        <path d="M18.5 575l-5 11h10z" />
        <path d="M73 636l14 5.5-14 5.5z" />
        <path d="M15 551l5 7 5-7M20 558v9" />
        <path d="M98 635l10 14M108 635l-10 14" />
      </g>
    </DrawingSvg>
  );
};

/* ---------- forum picture ---------- */
const OLIVE = "#b4b66a";
const Cad = ({ x, y, w, t, s = 27 }: { x: number; y: number; w: number; t: string; s?: number }) => (
  <text x={x} y={y} textLength={w} lengthAdjust="spacingAndGlyphs" fontFamily="Roboto, sans-serif" fontWeight="300" fontSize={s} fill={OLIVE}>
    {t}
  </text>
);
const ForumCircuit = ({ y, a, b, long, c }: { y: number; a: string; b: string; long: string; c: string }) => (
  <g>
    <Cad x={1037} y={y} w={long === "5x10" ? 178 : 168} t={`WDZ-BYJ(F)-${long}`} />
    <Cad x={long === "5x10" ? 1228 : 1218} y={y} w={49} t={a} />
    <Cad x={long === "5x10" ? 1290 : 1280} y={y} w={68} t={c} />
    <path d={`M986 ${y + 8}h262`} stroke="#a23a8e" strokeWidth="1.3" />
    <rect x="1249.5" y={y - 8} width="14" height="33" stroke="#3cb83c" strokeWidth="1.2" fill="none" />
    <path d={`M1250 ${y + 8}h60`} stroke={OLIVE} />
    <Cad x={long === "5x10" ? 1270 : 1264} y={y + 8} w={long === "5x10" ? 38 : 42} t={b} s={22} />
    <Cad x={1268} y={y + 24} w={44} t={long === "5x10" ? "14kW" : "11kW"} s={22} />
  </g>
);
const ForumPicture = () => (
  <PictureSvg width="416" height="330" viewBox="986 356 416 330">
    <rect x="986" y="356" width="416" height="330" fill="#000" />
    <path d="M986 367h4M990 367h30" stroke="#aaa" />
    <path d="M986 378h264" stroke="#a83838" strokeWidth="1.3" />
    <Cad x={1037} y={373} w={188} t="WDZ-BYJ(F)-4X2.5" />
    <Cad x={1238} y={373} w={48} t="SC20" />
    <Cad x={1277} y={373} w={75} t="AW9-1" />
    <circle cx="1261" cy="379" r="11.5" fill="none" stroke="#b06a8a" />
    <text x="1261" y="385" textAnchor="middle" fontFamily="Liberation Sans, sans-serif" fontSize="16" fill="#a66a8a">M</text>
    <path d="M1272 378h50" stroke={OLIVE} />
    <text x="1038" y="395" fontFamily='"Noto Sans CJK SC", sans-serif' fontWeight="700" fontSize="9.5" fill="#c9c848">控制原理:</text>
    <Cad x={1080} y={397} w={87} t="CPS-102" />
    <Cad x={1280} y={396} w={52} t="1.1kW" />
    <Cad x={1037} y={442} w={225} t="WDZ-KYJ(F)E-1(4X1.5)" />
    <Cad x={1275} y={442} w={44} t="SC20" />
    <Cad x={1337} y={442} w={25} t="WS" />
    <path d="M986 447h264" stroke="#b03030" strokeWidth="1.3" strokeDasharray="14 5 3 5" />
    <rect x="1260.5" y="442.5" width="23" height="11" fill="none" stroke="#a07a8a" />
    <circle cx="1266" cy="447.5" r="3" fill="none" stroke="#a07a8a" />
    <circle cx="1278" cy="447.5" r="3" fill="none" stroke="#a07a8a" />
    <ellipse cx="1344" cy="432" rx="29" ry="20.5" fill="none" stroke="#d80014" strokeWidth="3" />
    <ForumCircuit y={507} a="SC40" b="AL2f" long="5x10" c="SCE.WS" />
    <ForumCircuit y={563} a="SC40" b="AL2f" long="5x10" c="SCE.WS" />
    <ForumCircuit y={619} a="SC32" b="AL9d" long="5x6" c="SCE.WC" />
    <ForumCircuit y={675} a="SC32" b="ALPS" long="5x6" c="SCE.WC" />
  </PictureSvg>
);

const Favicon = () => (
  <svg width="16" height="17" viewBox="0 0 16 17">
    <path d="M2 4C2 1 14 1 14 4v6c0 3-12 3-12 0z" fill="#1f8fd0" />
    <circle cx="8" cy="4.5" r="3.4" fill="#bfe4f8" />
    <rect x="0" y="10" width="16" height="6" rx="2.5" fill="#1c8ad0" />
    <ellipse cx="8" cy="13" rx="3" ry="2" fill="none" stroke="#fff" strokeWidth="1.2" />
  </svg>
);
const Lens = () => (
  <svg width="15" height="15" viewBox="0 0 15 15" fill="none" stroke="#fff" strokeWidth="2">
    <circle cx="6" cy="6" r="4.5" />
    <path d="M9.5 9.5L14 14" strokeWidth="2.6" />
  </svg>
);
const QuestionMark = () => (
  <svg width="13" height="17" viewBox="0 0 13 17" fill="#f0c814" stroke="#a98a10" strokeWidth="0.7">
    <path d="M1 5c0-6 11-6 11 0 0 3-4 3-4 6H5c0-4 4-4 4-6 0-2-5-2-5 0z" />
    <circle cx="6.5" cy="14.5" r="1.9" />
  </svg>
);
const RestoreIcon = () => (
  <svg width="17" height="15" viewBox="0 0 17 15" fill="none" stroke="#666" strokeWidth="1.6">
    <path d="M1 11V1h14v3H4v10h7" />
    <path d="M4 4h12v6" />
    <path d="M11 11l2.5 2.5L16 11" />
  </svg>
);
const PictureIcon = () => (
  <svg width="14" height="13" viewBox="0 0 14 13">
    <rect width="14" height="13" fill="#3e9cd8" />
    <rect x="2" y="2" width="10" height="5" fill="#d8f0fb" />
    <rect x="4" y="9" width="6" height="4" fill="#e8f8ff" />
  </svg>
);

const MENU = [
  ["编辑", "E"],
  ["视图", "V"],
  ["插入", "I"],
  ["格式", "O"],
  ["工具", "T"],
  ["绘图", "D"],
  ["标注", "N"],
  ["修改", "M"],
  ["窗口", "W"],
  ["帮助", "H"],
];
const LAYERS = [
  ["照明层", "0.35", "#ff0000"],
  ["动力层", "0.25", "#ffff00"],
  ["消防层", "0.35", "#00ffff"],
  ["通讯层", "0.5", "#00ffff"],
];
const PLACES = ["CLE", "WE", "CE", "ACE", "BC", "CLC", "WC", "CC", "ACC"];

export default function App() {
  return (
    <Desktop>
      <Global />
      <CadWindow>
        <CadTitle>
          <CadTitleBtn />
          <CadTitleBtn />
          <CadTitleBtn $red />
        </CadTitle>
        <MenuBar>
          {MENU.map(([a, b]) => (
            <MenuItem key={a}>
              {a}
              <MenuLetter>({b})</MenuLetter>
            </MenuItem>
          ))}
          <WinGlyphs>
            <span>_</span>
            <span>❐</span>
            <span>×</span>
          </WinGlyphs>
        </MenuBar>
        <ToolRow $start={305}>
          <TB items={rowOneA} />
          <ToolGap $w={7} />
          <TB items={rowOneB} />
          <ToolGap $w={6} />
          <Tool>
            <Ico>{helpIcon}</Ico>
          </Tool>
          <Grip $w={19} />
          <TB items={rowOneC} />
          <Grip $w={17} />
          <TB items={rowOneD} />
        </ToolRow>
        <ToolRow $start={312}>
          <Grip $w={9} />
          <TB items={rowTwoA} />
          <Grip $w={19} />
          <TB items={rowTwoB} />
          <ToolGap $w={6} />
          <TB items={rowTwoC} />
          <Grip $w={19} />
          <Tool>
            <Ico>{rowTwoD[0]}</Ico>
          </Tool>
          <ToolGap $w={5} />
          <Tool>
            <Ico>{rowTwoD[1]}</Ico>
          </Tool>
        </ToolRow>
        <CanvasRow>
          <Canvas>
            <CadDrawing />
          </Canvas>
          <SideBar>
            <SideGrip />
            {sideIcons.map((n, i) =>
              n === "sep" ? (
                <SideGap key={i} />
              ) : (
                <SideTool key={i}>
                  <Ico s={19}>{n}</Ico>
                </SideTool>
              ),
            )}
          </SideBar>
        </CanvasRow>
        <LowerZone>
          <WhiteStrip />
          <BottomTools>
            <Grip $w={10} />
            <TB items={bottomA} />
            <ToolGap $w={6} />
            <TB items={bottomB} />
          </BottomTools>
        </LowerZone>
        <CommandGap />
        <Command>
          <CommandText>
            <CommandCjk>*线的起始点&lt;退出&gt;:*取消*</CommandCjk>
            mbx
          </CommandText>
          <CommandScroll>
            <ScrollBtn>
              <Chev dir="up" />
            </ScrollBtn>
            <ScrollBtn>
              <Chev />
            </ScrollBtn>
          </CommandScroll>
        </Command>
      </CadWindow>

      <Browser>
        <TabBar>
          <GhostTabEnd>×</GhostTabEnd>
          <ActiveTab>
            <Favicon />
            <TabText>专业造价问题答疑平台-广联达服</TabText>
            <TabClose>×</TabClose>
          </ActiveTab>
          <PlusCell>+</PlusCell>
          <TabRight>
            <RestoreIcon />
          </TabRight>
        </TabBar>
        <LinkBar>
          <span>》</span>
          <NavLink $ml={25}>算客工场</NavLink>
          <NavLink $ml={21}>造价指标</NavLink>
          <NavLink $ml={23}>官方知识库</NavLink>
          <NavLink $ml={22}>邀请函下载</NavLink>
          <NavLink $ml={22}>市政社区</NavLink>
          <NavLink $ml={21}>建筑材料问</NavLink>
        </LinkBar>
        <SearchRow>
          <SearchInput />
          <SearchBtn>
            <Lens />
            搜索一下
          </SearchBtn>
          <AskBtn>
            <AskMark>?</AskMark>
            我要提问
          </AskBtn>
        </SearchRow>
        <QTabs>
          <QActive>待解决问题</QActive>
          <QLink $ml={17}>已解决问题</QLink>
          <QLink $ml={16}>投票中</QLink>
          <QLink $ml={16}>官方精品</QLink>
          <QLink $ml={16}>施工精品</QLink>
          <QLink $ml={16}>零回复</QLink>
          <QLink $ml={14}>未</QLink>
        </QTabs>
        <ColTitle>标题</ColTitle>
        <QuestionRow>
          <QuestionMark />
          <QuestionLink>请问WS是什么敷设方式？</QuestionLink>
          <Coin />
          <Score>0</Score>
          <CategoryTag>[安装造价]</CategoryTag>
        </QuestionRow>
        <QuestionBox>
          <Meta>
            提问者：<Asker>小菜</Asker>
            <MetaBar>|</MetaBar>悬赏分：0分<MetaBar>|</MetaBar>回答次数：0次
          </Meta>
          <QuestionText>请问WS是什么敷设方式？</QuestionText>
          <ForumPicture />
          <TaskPopup>
            <TaskIcon />
            我的答疑任务
          </TaskPopup>
        </QuestionBox>
      </Browser>

      <FloatBar>
        <WinTitle>
          <FloatTitleText>线信息</FloatTitleText>
          <CloseBtn>
            <XMark />
          </CloseBtn>
        </WinTitle>
        <FloatBody>
          <Spacer $w={32} />
          <SelectArrow>
            <Chev />
          </SelectArrow>
          <Spacer $w={7} />
          <Swatch $c="#ff0000" $w={20} $h={19} />
          <Spacer $w={6} />
          <XpBtn $w={54}>回路编号</XpBtn>
          <Spacer $w={3} />
          <Spin w={53} h={21} v="WL1" />
          <Spacer $w={10} />
          <Select w={71} v="导线置上" />
          <Spacer $w={5} />
          <XpBtn $w={43}>设置 &gt;</XpBtn>
          <Spacer $w={7} />
          <Hint>?</Hint>
        </FloatBody>
      </FloatBar>

      <WireSettings>
        <WinTitle>平面导线设置</WinTitle>
        <HeaderRow>
          <HeaderCell>线宽：</HeaderCell>
          <HeaderCell $ml={25}>颜色：</HeaderCell>
          <HeaderCell $ml={115}>线型：</HeaderCell>
        </HeaderRow>
        {LAYERS.map(([name, w, c]) => (
          <LayerRow key={name}>
            <LayerName>{name}</LayerName>
            <LayerArrow>→</LayerArrow>
            <Spin w={60} v={w} />
            <Spacer $w={10} />
            <Swatch $c={c} />
            <Spacer $w={10} />
            <Select w={74} v="普通导线" />
            <LinePreview />
          </LayerRow>
        ))}
        <WireFooter>
          <Hint>?</Hint>
          <Spacer $w={132} />
          <XpBtn $w={73}>确定</XpBtn>
        </WireFooter>
      </WireSettings>

      <Annot>
        <WinTitle>
          导线标注
          <CloseBtn>
            <XMark />
          </CloseBtn>
        </WinTitle>
        <Group $h={47} $top={13} $pt={14}>
          <Legend>导线类型</Legend>
          <XpBtn $w={54}>导线型号</XpBtn>
          <Spacer $w={11} />
          <Field $w={59}>BV</Field>
          <Spacer $w={2} />
          <HelpBtn>
            <Hint>?</Hint>
          </HelpBtn>
          <Spacer $w={7} />
          <Radio $w={60} $on>
            普通
          </Radio>
          <Radio $w={59}>阻燃</Radio>
          <Radio $w={50}>耐火</Radio>
        </Group>
        <AnnotRow $top={10}>
          <XpBtn $w={54}>配线方式</XpBtn>
          <Spacer $w={11} />
          <Field $w={44}>TC</Field>
          <Spacer $w={8} />
          <XpBtn $w={54}>敷设部位</XpBtn>
          <Spacer $w={8} />
          <Field $w={41}>FC</Field>
          <Spacer $w={9} />
          <XpBtn $w={54}>穿管直径</XpBtn>
          <Spacer $w={6} />
          <Field $w={40}>15</Field>
        </AnnotRow>
        <AnnotRow $top={15} $h={21}>
          <XpBtn $w={76}>根数×截面积</XpBtn>
          <Spacer $w={10} />
          <Field $w={236} $h={21}>
            2x2.5
          </Field>
        </AnnotRow>
        <AnnotRow $top={16} $h={21}>
          <XpBtn $w={28}>编号</XpBtn>
          <Spacer $w={2} />
          <Spin w={41} h={21} v="WL1" />
          <Spacer $w={15} />
          <Field $w={237} $h={21} $ro>
            BV-2x2.5-TC15-FC
          </Field>
        </AnnotRow>
        <AnnotRow $top={10} $h={13}>
          <CheckBoxMark />
          简标 (只标型号)
        </AnnotRow>
        <Group $h={99} $top={11} $pt={6}>
          <Legend>历史记录</Legend>
          <ActionColumn>
            <XpBtn $w={58}>增加+</XpBtn>
            <XpBtn $w={58}>删除-</XpBtn>
          </ActionColumn>
          <HistoryList>
            <span>BV-2x2.5</span>
            <span>BV-2x4</span>
            <span>BV-3x2.5</span>
            <span>YJV-3x4</span>
            <span>ZR-BV</span>
          </HistoryList>
        </Group>
        <AnnotFooter>
          <Hint>?</Hint>
          <Spacer $w={70} />
          <XpBtn $w={74}>确定</XpBtn>
        </AnnotFooter>
      </Annot>

      <Place $active>
        <WinTitle $active>
          敷设部位
          <CloseBtn $active>
            <XMark />
          </CloseBtn>
        </WinTitle>
        <PlaceBody>
          <PlaceLeft>
            <PlaceList>
              <PlaceItems>
                {PLACES.map((p) => (
                  <PlaceItem key={p} $sel={p === "WC"}>
                    {p}
                  </PlaceItem>
                ))}
              </PlaceItems>
              <PlaceScroll>
                <ScrollBtn $tall={15}>
                  <Chev dir="up" />
                </ScrollBtn>
                <PlaceThumb />
                <ScrollBtn $tall={15}>
                  <Chev />
                </ScrollBtn>
              </PlaceScroll>
            </PlaceList>
            <PlaceInput $w={153} $h={21}>
              WC
            </PlaceInput>
            <PlaceDesc>暗敷设在墙内</PlaceDesc>
          </PlaceLeft>
          <PlaceRight>
            <XpBtn $w={73} $h={18} $default>
              确定
            </XpBtn>
            <PlaceBtnOffset $top={9}>
              <XpBtn $w={73} $h={18}>
                取消
              </XpBtn>
            </PlaceBtnOffset>
            <PlaceBtnOffset $top={33} $left={12}>
              <XpBtn $w={51} $h={18}>
                增加+
              </XpBtn>
            </PlaceBtnOffset>
            <PlaceBtnOffset $top={14} $left={12}>
              <XpBtn $w={51} $h={18}>
                删除-
              </XpBtn>
            </PlaceBtnOffset>
          </PlaceRight>
        </PlaceBody>
      </Place>

      <Overlay width="1402" height="727" viewBox="0 0 1402 727" fill="none">
        <ellipse cx="606" cy="476" rx="105" ry="123" transform="rotate(-3 606 476)" stroke="#d40a0a" strokeWidth="3.5" />
      </Overlay>
      <InsertRow>
        <PictureIcon />
        插入图片
      </InsertRow>
    </Desktop>
  );
}
